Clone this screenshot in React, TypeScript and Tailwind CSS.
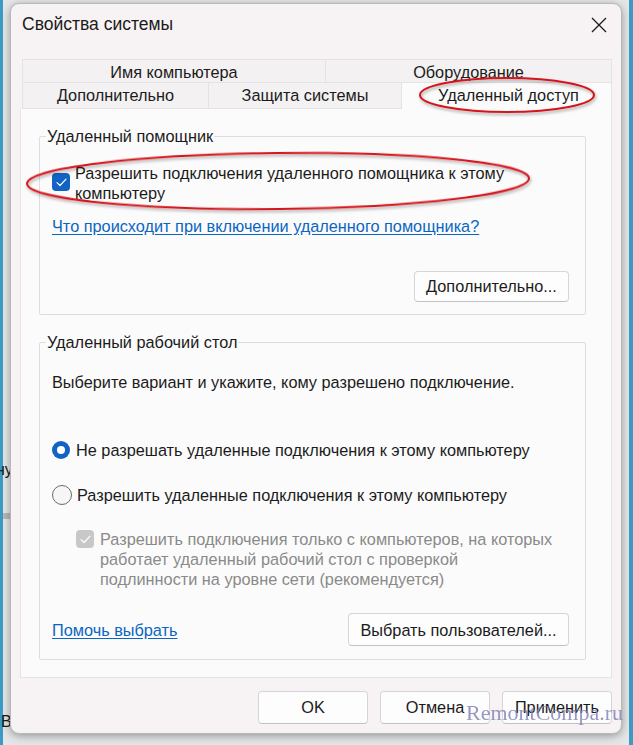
import React from 'react';

const font = { fontFamily: '"Liberation Sans", Arial, sans-serif' };

function Check({ disabled = false }: { disabled?: boolean }) {
  return (
    <span
      className={`flex h-[18px] w-[18px] shrink-0 items-center justify-center rounded-[4px] ${
        disabled ? 'bg-[#c8c8c8]' : 'bg-[#1163c4]'
      }`}
    >
      <svg width="11" height="9" viewBox="0 0 11 9" fill="none">
        <path d="M1 4.6 L4 7.5 L10 1.2" stroke="white" strokeWidth="1.2" strokeLinecap="round" strokeLinejoin="round" />
      </svg>
    </span>
  );
}

function Radio({ on = false }: { on?: boolean }) {
  return on ? (
    <span className="flex h-[18px] w-[18px] shrink-0 items-center justify-center rounded-full bg-[#1163c4]">
      <span className="h-[8px] w-[8px] rounded-full bg-white" />
    </span>
  ) : (
    <span className="h-[20px] w-[20px] shrink-0 rounded-full border border-[#6b6b6b] bg-[#f6f6f6]" />
  );
}

function Btn({ children, className = '' }: { children: React.ReactNode; className?: string }) {
  return (
    <div
      className={`flex items-center justify-center rounded-[4px] border border-[#d6d6d6] border-b-[#c2c2c2] bg-[#fdfdfd] text-[16.3px] text-[#1b1b1b] ${className}`}
    >
      {children}
    </div>
  );
}

function Group({ title, className = '', children }: { title: string; className?: string; children: React.ReactNode }) {
  return (
    <div className={`relative rounded-[2px] border border-[#dedede] ${className}`}>
      <span className="absolute left-[6px] top-[-11px] bg-[#fbfbfb] px-[1px] text-[16.3px] leading-[20px] text-[#1b1b1b]">{title}</span>
      {children}
    </div>
  );
}

export default function App() {
  return (
    <div className="relative h-[745px] w-[633px] overflow-hidden bg-[#e4e6e8]" style={font}>
      {/* desktop edges */}
      <div className="absolute left-0 top-0 h-full w-[3px] bg-[#3a9cc4]" />
      <div className="absolute right-0 top-0 h-full w-[4px] bg-[#3a9cc4]" />
      <div className="absolute left-[3px] top-[513px] h-[6px] w-[8px] bg-[#b9b9b9]" />
      <span className="absolute left-[-4px] top-[458px] text-[16px] text-[#1b1b1b]">ну</span>
      <span className="absolute left-[1px] top-[710px] text-[16px] text-[#1b1b1b]">В</span>

      {/* window */}
      <div className="relative ml-[10px] mt-[3px] flex h-[731px] w-[612px] flex-col rounded-[9px] border border-[#b8b8b8] bg-[#f7f2f3] shadow-[0_2px_8px_rgba(0,0,0,0.35)]">
        <div className="flex h-[40px] items-center justify-between pl-[11px] pr-[14px] pt-[1px]">
          <span className="text-[17.5px] text-[#1b1b1b]">Свойства системы</span>
          <svg width="16" height="16" viewBox="0 0 16 16">
            <path d="M1 1 L15 15 M15 1 L1 15" stroke="#1b1b1b" strokeWidth="1.3" />
          </svg>
        </div>

        {/* tabs */}
        <div className="ml-[11px] mt-[15px] w-[590px]">
          <div className="flex h-[24px] text-[16.3px] text-[#1b1b1b]">
            <div className="flex w-[304px] items-center justify-center border border-[#e4e2e2] bg-[#f3f1f1] pt-[2px]">Имя компьютера</div>
            <div className="flex w-[286px] items-center justify-center border border-l-0 border-[#e4e2e2] bg-[#f3f1f1] pt-[2px]">Оборудование</div>
          </div>
          <div className="flex h-[26px] text-[16.3px] text-[#1b1b1b]">
            <div className="flex w-[187px] items-center justify-center border border-t-0 border-[#e4e2e2] bg-[#f3f1f1]">Дополнительно</div>
            <div className="flex w-[193px] items-center justify-center border border-l-0 border-t-0 border-[#e4e2e2] bg-[#f3f1f1]">Защита системы</div>
            <div className="flex w-[210px] items-center justify-center border-r border-[#e4e2e2] bg-[#fbfbfb] pl-[4px] pb-[2px]">Удаленный доступ</div>
          </div>
        </div>

        {/* tab panel */}
        <div className="ml-[9px] flex h-[569px] w-[592px] flex-col border border-t-0 border-[#e4e2e2] bg-[#fbfbfb] pl-[18px] pr-[25px] pt-[27px]">
          <Group title="Удаленный помощник" className="h-[179px]">
            <div className="flex flex-col pl-[12px] pr-[16px] pt-[26px]">
              <div className="flex items-start gap-[5px] text-[16.3px] leading-[20px] text-[#1b1b1b]">
                <span className="mt-[10px]"><Check /></span>
                <span>
                  Разрешить подключения удаленного помощника к этому
                  <br />
                  компьютеру
                </span>
              </div>
              <span className="mt-[13px] text-[16.3px] leading-[20px] text-[#0a66c2] underline underline-offset-2">
                Что происходит при включении удаленного помощника?
              </span>
              <div className="mt-[35px] flex justify-end">
                <Btn className="h-[31px] w-[155px]">Дополнительно...</Btn>
              </div>
            </div>
          </Group>

          <Group title="Удаленный рабочий стол" className="mt-[27px] h-[318px]">
            <div className="flex flex-col pl-[12px] pr-[16px] pt-[29px] text-[16.3px] leading-[20px] text-[#1b1b1b]">
              <span>Выберите вариант и укажите, кому разрешено подключение.</span>
              <div className="mt-[48px] flex items-center gap-[6px]">
                <Radio on />
                <span>Не разрешать удаленные подключения к этому компьютеру</span>
              </div>
              <div className="mt-[25px] flex items-center gap-[5px]">
                <Radio />
                <span>Разрешить удаленные подключения к этому компьютеру</span>
              </div>
              <div className="mt-[24px] flex items-start gap-[6px] pl-[24px] text-[#8a8a8a]">
                <span className="mt-[1px]"><Check disabled /></span>
                <span>
                  Разрешить подключения только с компьютеров, на которых
                  <br />
                  работает удаленный рабочий стол с проверкой
                  <br />
                  подлинности на уровне сети (рекомендуется)
                </span>
              </div>
              <div className="mt-[24px] flex items-center justify-between">
                <span className="text-[#0a66c2] underline underline-offset-2">Помочь выбрать</span>
                <Btn className="h-[33px] w-[221px]">Выбрать пользователей...</Btn>
              </div>
            </div>
          </Group>
        </div>

        {/* dialog buttons */}
        <div className="mt-[13px] flex justify-end gap-[12px] pr-[9px]">
          <Btn className="h-[33px] w-[110px] border-[#1a6fc0] border-b-[#1a6fc0]">OK</Btn>
          <Btn className="h-[33px] w-[110px]">Отмена</Btn>
          <Btn className="h-[33px] w-[110px]">Применить</Btn>
        </div>
      </div>

      {/* red annotation ellipses + watermark */}
      <svg className="pointer-events-none absolute left-0 top-0" width="633" height="745">
        <defs>
          <filter id="sh" x="-10%" y="-30%" width="120%" height="160%">
            <feDropShadow dx="1" dy="2" stdDeviation="1.5" floodColor="#000" floodOpacity="0.35" />
          </filter>
        </defs>
        <ellipse cx="507" cy="95" rx="87" ry="17" fill="none" stroke="#d4161c" strokeWidth="2" filter="url(#sh)" />
        <ellipse cx="278" cy="181" rx="251" ry="28" fill="none" stroke="#d4161c" strokeWidth="2" filter="url(#sh)" transform="rotate(-0.6 278 181)" />
      </svg>
      <span
        className="absolute left-[466px] top-[696px] text-[22px] text-[#7e7eb4] opacity-80"
        style={{ fontFamily: '"Liberation Serif", "Times New Roman", serif' }}
      >
        RemontCompa.ru
      </span>
    </div>
  );
}
